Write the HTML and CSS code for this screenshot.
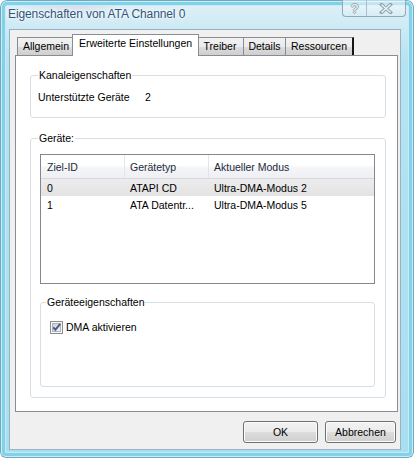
FILE: index.html
```html
<!DOCTYPE html>
<html lang="de">
<head>
    <meta charset="UTF-8">
    <title>Eigenschaften von ATA Channel 0</title>
    <link rel="stylesheet" href="styles.css">
</head>
<body>
    <div class="window">
        <div class="titlebar">
            <span class="title">Eigenschaften von ATA Channel 0</span>
            <div class="caption-buttons">
                <span class="cap-btn help">?</span>
                <span class="cap-btn close">
                    <svg width="14" height="11" viewBox="0 0 14 11">
                        <path d="M2.5 1.5 L11.5 9.5 M11.5 1.5 L2.5 9.5" stroke="#8ea2ae" stroke-width="3.4" stroke-linecap="square"/>
                        <path d="M2.5 1.5 L11.5 9.5 M11.5 1.5 L2.5 9.5" stroke="#eef6f9" stroke-width="1.4"/>
                    </svg>
                </span>
            </div>
        </div>

        <div class="client">
            <div class="tabs">
                <span class="tab t-general">Allgemein</span>
                <span class="tab active t-advanced">Erweiterte Einstellungen</span>
                <span class="tab t-driver">Treiber</span>
                <span class="tab t-details">Details</span>
                <span class="tab last t-resources">Ressourcen</span>
            </div>

            <div class="panel">
                <fieldset class="group g-channel">
                    <legend>Kanaleigenschaften</legend>
                    <div class="prop-row">
                        <span class="prop-name">Unterstützte Geräte</span>
                        <span>2</span>
                    </div>
                </fieldset>

                <fieldset class="group g-devices">
                    <legend>Geräte:</legend>
                    <div class="listview">
                        <div class="lv-header">
                            <span class="col c-id">Ziel-ID</span>
                            <span class="col c-type">Gerätetyp</span>
                            <span class="col c-mode">Aktueller Modus</span>
                        </div>
                        <div class="lv-row selected">
                            <span class="col c-id">0</span>
                            <span class="col c-type">ATAPI CD</span>
                            <span class="col c-mode">Ultra-DMA-Modus 2</span>
                        </div>
                        <div class="lv-row">
                            <span class="col c-id">1</span>
                            <span class="col c-type">ATA Datentr...</span>
                            <span class="col c-mode">Ultra-DMA-Modus 5</span>
                        </div>
                    </div>

                    <fieldset class="group g-props">
                        <legend>Geräteeigenschaften</legend>
                        <label class="check">
                            <svg width="13" height="13" viewBox="0 0 13 13">
                                <defs>
                                    <linearGradient id="cbFill" x1="0" y1="0" x2="1" y2="1">
                                        <stop offset="0" stop-color="#c6cbd2"/>
                                        <stop offset="1" stop-color="#f5f6f7"/>
                                    </linearGradient>
                                </defs>
                                <rect x="0.5" y="0.5" width="12" height="12" fill="#f6f6f6" stroke="#8e8f8f"/>
                                <rect x="2.5" y="2.5" width="8" height="8" fill="url(#cbFill)" stroke="#b1b6bd"/>
                                <path d="M3.2 6.4 L5.4 8.8 L10.2 2.8" fill="none" stroke="#485d8a" stroke-width="2"/>
                            </svg>
                            <span>DMA aktivieren</span>
                        </label>
                    </fieldset>
                </fieldset>
            </div>

            <div class="buttons">
                <button class="btn btn-ok">OK</button>
                <button class="btn btn-cancel">Abbrechen</button>
            </div>
        </div>
    </div>
</body>
</html>
```

FILE: styles.css
```css
/* Base */
* {
    box-sizing: border-box;
}

body {
    margin: 0;
    font-family: "Liberation Sans", Arial, sans-serif;
    font-size: 10.5px;
    color: #000;
    background: #fff;
}

/* Window frame (Aero glass) */
.window {
    width: 414px;
    height: 458px;
    display: flex;
    flex-direction: column;
    padding: 0 13px 8px 9px;
    border-radius: 7px 7px 6px 6px;
    background:
        radial-gradient(ellipse 60px 14px at 70px 0, rgba(214, 170, 196, 0.45), transparent),
        linear-gradient(180deg, #e2f0f7 0, #cdeaf4 28px, #b6e3f1 60px, #a9def0 100%);
    box-shadow:
        inset 0 0 0 1px #6fa9bf,
        inset 0 0 0 2px #c9eef8,
        inset 0 0 0 5px #82d1e8,
        inset 0 0 0 6px #c4ebf6;
}

.titlebar {
    height: 29px;
    display: flex;
    justify-content: space-between;
    align-items: flex-start;
}

.title {
    margin: 7px 0 0 -1px;
    font-size: 12px;
    letter-spacing: -0.1px;
    line-height: 14px;
    color: #34557a;
    text-shadow: 0 0 6px #fff, 0 0 3px #fff;
}

.caption-buttons {
    display: flex;
    height: 17px;
    margin-right: -5px;
    border: 1px solid #8fa9b8;
    border-top: none;
    border-radius: 0 0 4px 4px;
    background: linear-gradient(180deg, rgba(255, 255, 255, 0.55), rgba(214, 236, 244, 0.4));
}

.cap-btn {
    display: flex;
    align-items: center;
    justify-content: center;
}

.help {
    width: 24px;
    border-right: 1px solid #a9c0cc;
    font-size: 13px;
    color: #eef6f9;
    text-shadow: 1px 0 0 #93a6b1, -1px 0 0 #93a6b1, 0 1px 0 #93a6b1, 0 -1px 0 #93a6b1;
}

.close {
    width: 38px;
}

/* Client area */
.client {
    flex: 1;
    display: flex;
    flex-direction: column;
    background: #f0f0f0;
    border: 1px solid #98b2c1;
}

/* Tabs */
.tabs {
    height: 25px;
    display: flex;
    align-items: flex-end;
    padding-left: 7px;
}

.tab {
    height: 18px;
    display: flex;
    align-items: center;
    justify-content: center;
    padding-bottom: 1px;
    border: 1px solid #898c95;
    border-bottom: none;
    border-right: none;
    background: linear-gradient(180deg, #f2f2f2 0, #ebebeb 50%, #dddddd 51%, #cfcfcf 100%);
}

.tab.active {
    position: relative;
    z-index: 1;
    height: 22px;
    margin: 0 -2px -1px;
    padding-bottom: 5px;
    border-right: 1px solid #898c95;
    background: #fff;
}

.tab.active + .tab {
    border-left: none;
}

.tab.last {
    border-right: 2px solid #151515;
}

.t-general { width: 57px; }
.t-advanced { width: 127px; }
.t-driver { width: 46px; }
.t-details { width: 42px; }
.t-resources { width: 69px; }

/* Tab page */
.panel {
    width: 383px;
    height: 357px;
    margin-left: 5px;
    background: #fff;
    border: 1px solid #898c95;
}

.group {
    margin: 0;
    border: 1px solid #d5dfe5;
    border-radius: 3px;
}

.group legend {
    padding: 0 1px;
    line-height: 14px;
}

.g-channel {
    margin: 12px 11px 0 14px;
    padding: 8px 7px 13px;
}

.prop-row {
    display: flex;
    line-height: 14px;
}

.prop-name {
    width: 107px;
}

.g-devices {
    margin: 13px 11px 0 14px;
    padding: 9px 10px 10px 9px;
}

.g-devices > legend {
    margin-left: -2px;
}

/* List view */
.listview {
    height: 130px;
    border: 1px solid #828790;
}

.lv-header {
    height: 24px;
    display: flex;
    align-items: center;
    color: #1e2a3a;
    background: linear-gradient(180deg, #ffffff 0, #ffffff 45%, #f4f5f7 55%, #eef0f3 100%);
    border-bottom: 1px solid #d5d8dc;
}

.lv-header .col {
    height: 100%;
    display: flex;
    align-items: center;
    border-right: 1px solid #e2e5ea;
}

.lv-header .c-mode {
    border-right: none;
}

.lv-row {
    height: 17px;
    display: flex;
    align-items: center;
}

.lv-row.selected {
    background: linear-gradient(180deg, #ececec, #e3e3e3);
}

.col {
    padding-left: 6px;
    white-space: nowrap;
}

.c-id { width: 84px; }
.c-type { width: 84px; padding-left: 5px; }
.c-mode { flex: 1; padding-left: 5px; }

/* Device properties */
.g-props {
    margin-top: 11px;
    padding: 11px 9px 52px;
}

.g-props > legend {
    margin-left: -4px;
}

.check {
    display: flex;
    align-items: center;
    gap: 3px;
    height: 14px;
}

/* Dialog buttons */
.buttons {
    display: flex;
    justify-content: flex-end;
    gap: 7px;
    margin-top: 9px;
    padding-right: 4px;
}

.btn {
    height: 22px;
    padding: 0;
    font-family: inherit;
    font-size: 10.5px;
    color: #000;
    border: 1px solid #707070;
    border-radius: 3px;
    background: linear-gradient(180deg, #f2f2f2 0, #ebebeb 50%, #dddddd 51%, #cfcfcf 100%);
    box-shadow: inset 0 0 0 1px #fbfbfb;
}

.btn-ok { width: 75px; }
.btn-cancel { width: 71px; }
```
